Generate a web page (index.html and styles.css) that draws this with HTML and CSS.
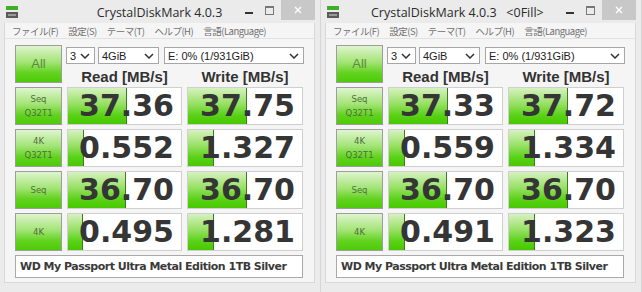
FILE: index.html
```html
<!DOCTYPE html>
<html lang="ja">
<head>
  <meta charset="UTF-8">
  <title>CrystalDiskMark 4.0.3</title>
  <link rel="stylesheet" href="styles.css">
</head>
<body>

<div class="desktop">

  <!-- left window -->
  <div class="window">
    <div class="titlebar">
      <svg class="app-icon" width="12" height="12" viewBox="0 0 12 12">
        <rect x="0" y="0" width="12" height="4" fill="#3fae2a"/>
        <rect x="0" y="6" width="12" height="6" fill="#5a5a5a"/>
        <rect x="2" y="8" width="8" height="2" fill="#9a9a9a"/>
      </svg>
      <div class="title">CrystalDiskMark 4.0.3</div>
      <div class="controls">
        <span class="ctl-min"></span>
        <span class="ctl-max"></span>
        <span class="ctl-close">
          <svg width="8" height="8" viewBox="0 0 8 8"><path d="M1 1L7 7M7 1L1 7" stroke="#fff" stroke-width="1.4"/></svg>
        </span>
      </div>
    </div>
    <div class="menubar">
      <span>ファイル(F)</span>
      <span>設定(S)</span>
      <span>テーマ(T)</span>
      <span>ヘルプ(H)</span>
      <span>言語(Language)</span>
    </div>
    <div class="client">
      <div class="grid">
        <div class="btn btn-all">All</div>
        <div class="top">
          <div class="selects">
            <div class="select s-count">3<svg width="10" height="6" viewBox="0 0 10 6"><path d="M1 1L5 5L9 1" fill="none" stroke="#333" stroke-width="1.5"/></svg></div>
            <div class="select s-size">4GiB<svg width="10" height="6" viewBox="0 0 10 6"><path d="M1 1L5 5L9 1" fill="none" stroke="#333" stroke-width="1.5"/></svg></div>
            <div class="select s-drive">E: 0% (1/931GiB)<svg width="10" height="6" viewBox="0 0 10 6"><path d="M1 1L5 5L9 1" fill="none" stroke="#333" stroke-width="1.5"/></svg></div>
          </div>
          <div class="heads">
            <span>Read [MB/s]</span>
            <span>Write [MB/s]</span>
          </div>
        </div>

        <div class="btn"><span>Seq</span><span>Q32T1</span></div>
        <div class="cell"><div class="bar" style="width:51%"></div><span class="num">37.36</span></div>
        <div class="cell"><div class="bar" style="width:51%"></div><span class="num">37.75</span></div>

        <div class="btn"><span>4K</span><span>Q32T1</span></div>
        <div class="cell"><div class="bar" style="width:13%"></div><span class="num">0.552</span></div>
        <div class="cell"><div class="bar" style="width:21.5%"></div><span class="num">1.327</span></div>

        <div class="btn"><span>Seq</span></div>
        <div class="cell"><div class="bar" style="width:50.5%"></div><span class="num">36.70</span></div>
        <div class="cell"><div class="bar" style="width:51%"></div><span class="num">36.70</span></div>

        <div class="btn"><span>4K</span></div>
        <div class="cell"><div class="bar" style="width:12%"></div><span class="num">0.495</span></div>
        <div class="cell"><div class="bar" style="width:21.5%"></div><span class="num">1.281</span></div>

        <div class="drive">WD My Passport Ultra Metal Edition 1TB Silver</div>
      </div>
    </div>
  </div>

  <!-- right window (0Fill) -->
  <div class="window">
    <div class="titlebar">
      <svg class="app-icon" width="12" height="12" viewBox="0 0 12 12">
        <rect x="0" y="0" width="12" height="4" fill="#3fae2a"/>
        <rect x="0" y="6" width="12" height="6" fill="#5a5a5a"/>
        <rect x="2" y="8" width="8" height="2" fill="#9a9a9a"/>
      </svg>
      <div class="title title-long">CrystalDiskMark 4.0.3   &lt;0Fill&gt;</div>
      <div class="controls">
        <span class="ctl-min"></span>
        <span class="ctl-max"></span>
        <span class="ctl-close">
          <svg width="8" height="8" viewBox="0 0 8 8"><path d="M1 1L7 7M7 1L1 7" stroke="#fff" stroke-width="1.4"/></svg>
        </span>
      </div>
    </div>
    <div class="menubar">
      <span>ファイル(F)</span>
      <span>設定(S)</span>
      <span>テーマ(T)</span>
      <span>ヘルプ(H)</span>
      <span>言語(Language)</span>
    </div>
    <div class="client">
      <div class="grid">
        <div class="btn btn-all">All</div>
        <div class="top">
          <div class="selects">
            <div class="select s-count">3<svg width="10" height="6" viewBox="0 0 10 6"><path d="M1 1L5 5L9 1" fill="none" stroke="#333" stroke-width="1.5"/></svg></div>
            <div class="select s-size">4GiB<svg width="10" height="6" viewBox="0 0 10 6"><path d="M1 1L5 5L9 1" fill="none" stroke="#333" stroke-width="1.5"/></svg></div>
            <div class="select s-drive">E: 0% (1/931GiB)<svg width="10" height="6" viewBox="0 0 10 6"><path d="M1 1L5 5L9 1" fill="none" stroke="#333" stroke-width="1.5"/></svg></div>
          </div>
          <div class="heads">
            <span>Read [MB/s]</span>
            <span>Write [MB/s]</span>
          </div>
        </div>

        <div class="btn"><span>Seq</span><span>Q32T1</span></div>
        <div class="cell"><div class="bar" style="width:51%"></div><span class="num">37.33</span></div>
        <div class="cell"><div class="bar" style="width:51%"></div><span class="num">37.72</span></div>

        <div class="btn"><span>4K</span><span>Q32T1</span></div>
        <div class="cell"><div class="bar" style="width:13%"></div><span class="num">0.559</span></div>
        <div class="cell"><div class="bar" style="width:21.5%"></div><span class="num">1.334</span></div>

        <div class="btn"><span>Seq</span></div>
        <div class="cell"><div class="bar" style="width:50.5%"></div><span class="num">36.70</span></div>
        <div class="cell"><div class="bar" style="width:51%"></div><span class="num">36.70</span></div>

        <div class="btn"><span>4K</span></div>
        <div class="cell"><div class="bar" style="width:13%"></div><span class="num">0.491</span></div>
        <div class="cell"><div class="bar" style="width:21.5%"></div><span class="num">1.323</span></div>

        <div class="drive">WD My Passport Ultra Metal Edition 1TB Silver</div>
      </div>
    </div>
  </div>

</div>

</body>
</html>
```

FILE: styles.css
```css
/* general */
body {
  margin: 0;
  background: #e6e6e6;
  font-family: "Liberation Sans", Arial, sans-serif;
  color: #333;
}

.desktop {
  display: flex;
}

/* window frame */
.window {
  width: 321px;
  height: 300px;
  box-sizing: border-box;
  background: #ebebeb;
  border-right: 1px solid #d6d6d6;
  padding: 0 5px 0 4px;
  display: flex;
  flex-direction: column;
}

.titlebar {
  height: 23px;
  display: flex;
  align-items: center;
  position: relative;
}
.app-icon {
  margin: 0 0 0 2px;
  flex: none;
}
.title {
  position: absolute;
  left: 0;
  right: 0;
  top: 0;
  line-height: 25px;
  text-align: center;
  font-family: "Open Sans", "Liberation Sans", sans-serif;
  font-size: 12.5px;
  color: #2b2b2b;
  white-space: pre;
  pointer-events: none;
}
.title-long {
  text-align: left;
  padding-left: 46px;
}

.controls {
  margin-left: auto;
  display: flex;
  align-items: flex-start;
  align-self: flex-start;
  height: 20px;
}
.ctl-min {
  width: 8px;
  height: 2px;
  background: #333;
  margin: 12px 12px 0 0;
}
.ctl-max {
  width: 7px;
  height: 6px;
  border: 1px solid #777;
  border-top-width: 2px;
  margin: 6px 7px 0 0;
}
.ctl-close {
  width: 34px;
  height: 20px;
  background: #c8c8c8;
  display: flex;
  align-items: center;
  justify-content: center;
}

/* menu */
.menubar {
  height: 15px;
  background: #f5f5f5;
  border-left: 1px solid #d8d8d8;
  border-right: 1px solid #d8d8d8;
  display: flex;
  align-items: center;
  gap: 10px;
  padding-left: 7px;
  font-family: "Noto Sans CJK JP", "Liberation Sans", sans-serif;
  font-size: 9.5px;
  letter-spacing: -0.5px;
  color: #707070;
  white-space: nowrap;
}

/* client area */
.client {
  background: #f5f5f5;
  border: 1px solid #d8d8d8;
  border-top-color: #e2e2e2;
  padding: 6px 0 4px 10px;
}

.grid {
  display: grid;
  grid-template-columns: 47px 115px 116px;
  grid-template-rows: 38px 38px 38px 38px 38px 23px;
  column-gap: 5px;
  row-gap: 4px;
}

.btn {
  box-sizing: border-box;
  border: 1px solid #9d9d9d;
  background: linear-gradient(#dff5cf, #a2e475 45%, #62d21f 75%, #4ccb06);
  display: flex;
  flex-direction: column;
  align-items: center;
  justify-content: center;
  font-family: "DejaVu Sans", sans-serif;
  font-size: 8.5px;
  line-height: 14px;
  color: #4f6f40;
}
.btn-all {
  font-family: "Liberation Sans", sans-serif;
  font-size: 13px;
  color: #5c8a3c;
}

.top {
  grid-column: 2 / 4;
  display: flex;
  flex-direction: column;
}
.selects {
  display: flex;
  margin: 2px -1px 0 -1px;
  gap: 3px;
}
.select {
  box-sizing: border-box;
  height: 17px;
  background: #fff;
  border: 1px solid #a6a6a6;
  display: flex;
  align-items: center;
  justify-content: space-between;
  padding: 0 4px 0 3px;
  font-size: 11px;
  color: #222;
}
.s-count { width: 29px; }
.s-size { width: 61px; margin-right: 2px; }
.s-drive { width: 140px; }

.heads {
  display: flex;
  gap: 5px;
  margin-top: 5px;
}
.heads span {
  width: 115px;
  text-align: center;
  font-weight: bold;
  font-size: 15px;
  line-height: 15px;
  color: #333;
}
.heads span + span { width: 116px; }

/* result cells */
.cell {
  position: relative;
  box-sizing: border-box;
  background: #fff;
  border: 1px solid #cfcfcf;
  display: flex;
  align-items: center;
  justify-content: flex-end;
  padding-right: 7px;
}
.bar {
  position: absolute;
  left: 0;
  top: 0;
  bottom: 0;
  background: linear-gradient(#d6f2c0, #96e062 45%, #5ad218 75%, #47c800);
  border-right: 1px solid #3d7a22;
}
.num {
  position: relative;
  font-family: "DejaVu Sans", sans-serif;
  font-weight: bold;
  font-size: 30px;
  line-height: 30px;
  color: #353535;
}

.drive {
  grid-column: 1 / 4;
  box-sizing: border-box;
  background: #fff;
  border: 1px solid #a9a9a9;
  display: flex;
  align-items: center;
  padding-left: 4px;
  font-family: "DejaVu Sans", sans-serif;
  font-weight: bold;
  font-size: 11px;
  letter-spacing: -0.5px;
  color: #3a3a3a;
  white-space: nowrap;
}
```
